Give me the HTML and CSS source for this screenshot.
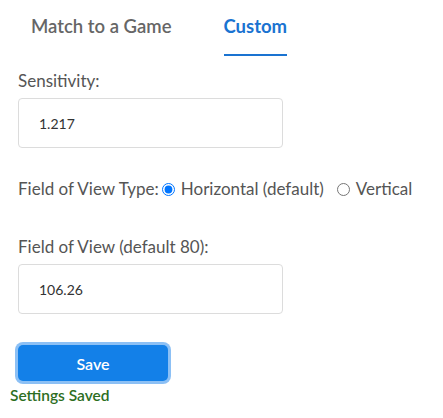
FILE: index.html
```html
<!DOCTYPE html>
<html lang="en">
<head>
<meta charset="utf-8">
<title>Custom settings</title>
<link rel="stylesheet" href="styles.css">
</head>
<body>
<div class="tabs">
  <div class="tab">Match to a Game</div>
  <div class="tab active">Custom</div>
</div>
<form class="form">
  <label class="field-label" for="sens">Sensitivity:</label>
  <input class="text-input" id="sens" type="text" value="1.217">
  <div class="radio-row">
    <span class="radio-title">Field of View Type:</span>
    <label class="radio-option"><input type="radio" name="fovtype" checked> Horizontal (default)</label>
    <label class="radio-option"><input type="radio" name="fovtype"> Vertical</label>
  </div>
  <label class="field-label fov-label" for="fov">Field of View (default 80):</label>
  <input class="text-input" id="fov" type="text" value="106.26">
  <button class="save" type="button">Save</button>
</form>
<div class="status">Settings Saved</div>
</body>
</html>
```
FILE: styles.css
```css
html, body {
  margin: 0;
  padding: 0;
  background: #fff;
}
body {
  font-family: Lato, "Open Sans", sans-serif;
  color: #555;
}
.tabs {
  display: flex;
  gap: 52px;
  padding: 12px 0 0 31px;
}
.tab {
  font-size: 18.5px;
  font-weight: 600;
  line-height: 28px;
  color: #666;
  padding-bottom: 14px;
  border-bottom: 2px solid transparent;
}
.tab.active {
  color: #1a73d1;
  font-weight: 700;
  border-bottom-color: #1a73d1;
}
.form {
  display: flex;
  flex-direction: column;
  align-items: flex-start;
  padding: 0 0 0 18px;
}
.field-label {
  font-size: 17px;
  line-height: 22px;
  margin-top: 14px;
  margin-bottom: 6px;
}
.text-input {
  box-sizing: border-box;
  width: 265px;
  height: 50px;
  border: 1px solid #dcdcdc;
  border-radius: 4px;
  padding: 0 20px;
  font-family: inherit;
  font-size: 14px;
  color: #333;
  outline: none;
  margin: 0;
}
.radio-row {
  display: flex;
  align-items: center;
  margin-top: 30px;
  font-size: 17px;
  line-height: 22px;
}
.radio-option {
  display: flex;
  align-items: center;
  margin-left: 3px;
  margin-right: 10px;
}
.radio-option input {
  margin: 0 6px 0 0;
  width: 13px;
  height: 13px;
}
.fov-label {
  margin-top: 36px;
}
.save {
  margin-top: 31px;
  width: 150px;
  height: 36px;
  border: none;
  border-radius: 5px;
  background: #1380e8;
  color: #fff;
  font-family: inherit;
  font-size: 16px;
  font-weight: 600;
  box-shadow: 0 0 0 3px #8cc0f5;
}
.status {
  margin: 4px 0 0 10px;
  color: #2d6e1f;
  font-size: 15.5px;
  font-weight: 600;
  line-height: 20px;
}
```
